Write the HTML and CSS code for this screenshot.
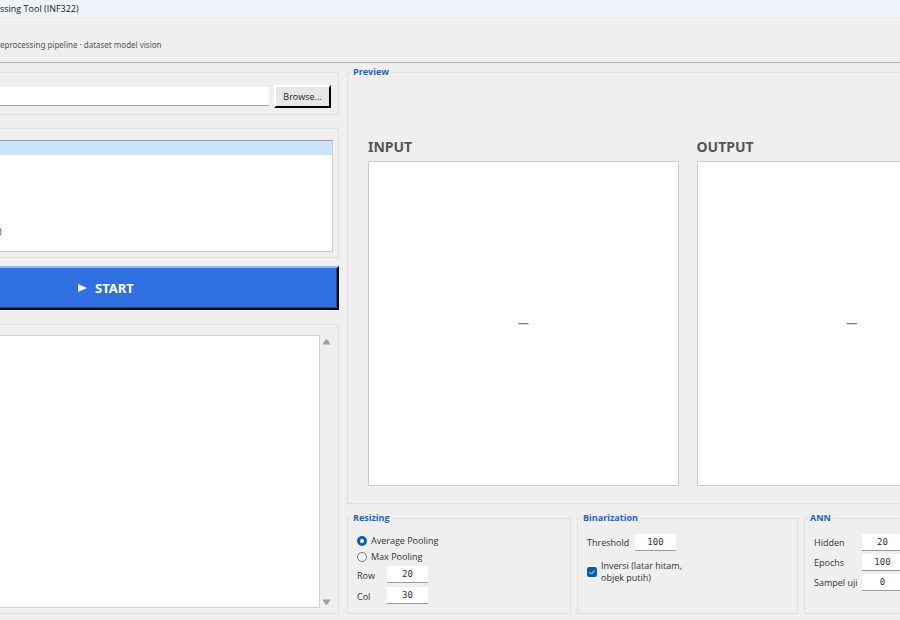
FILE: index.html
```
<!DOCTYPE html>
<html lang="id">
<head>
<meta charset="utf-8">
<title>Processing Tool (INF322)</title>
<link rel="stylesheet" href="styles.css">
</head>
<body>
<div class="window">
  <div class="titlebar">ssing Tool (INF322)</div>
  <header class="header">eprocessing pipeline · dataset model vision</header>
  <main class="main">
    <div class="side">
      <section class="panel file">
        <input class="path" type="text" aria-label="Path">
        <button class="browse" type="button">Browse...</button>
      </section>
      <section class="panel steps">
        <ul class="list">
          <li class="selected"></li><li></li><li></li><li></li><li></li><li></li><li>)</li>
        </ul>
      </section>
      <button class="start" type="button"><svg width="9" height="8" viewBox="0 0 9 8"><path d="M0 0L9 4L0 8Z" fill="#fff"/></svg>START</button>
      <section class="panel log">
        <textarea class="output" aria-label="Log" readonly></textarea>
        <div class="scroll">
          <svg width="7" height="6" viewBox="0 0 7 6"><path d="M2.600 .5H4.400L7 4.500V5.500H0V4.500Z" fill="#a0a0a0"/></svg>
          <svg width="7" height="6" viewBox="0 0 7 6"><path d="M2.600 5.500H4.400L7 1.500V.5H0V1.500Z" fill="#a0a0a0"/></svg>
        </div>
      </section>
    </div>
    <div class="content">
      <fieldset class="group preview">
        <legend>Preview</legend>
        <div class="views">
          <figure><figcaption>INPUT</figcaption><div class="canvas"><span class="dash">—</span></div></figure>
          <figure><figcaption>OUTPUT</figcaption><div class="canvas"><span class="dash">—</span></div></figure>
        </div>
      </fieldset>
      <div class="settings">
        <fieldset class="group">
          <legend>Resizing</legend>
          <label class="option"><input type="radio" name="pool" checked>Average Pooling</label>
          <label class="option"><input type="radio" name="pool">Max Pooling</label>
          <div class="fields size">
            <label for="row">Row</label><input id="row" class="num" type="text" value="20">
            <label for="col">Col</label><input id="col" class="num" type="text" value="30">
          </div>
        </fieldset>
        <fieldset class="group">
          <legend>Binarization</legend>
          <div class="fields threshold">
            <label for="thr">Threshold</label><input id="thr" class="num" type="text" value="100">
          </div>
          <label class="option invert"><input type="checkbox" checked><span>Inversi (latar hitam,<br>objek putih)</span></label>
        </fieldset>
        <fieldset class="group">
          <legend>ANN</legend>
          <div class="fields ann">
            <label for="hid">Hidden</label><input id="hid" class="num" type="text" value="20">
            <label for="epo">Epochs</label><input id="epo" class="num" type="text" value="100">
            <label for="uji">Sampel uji</label><input id="uji" class="num" type="text" value="0">
          </div>
        </fieldset>
      </div>
    </div>
  </main>
</div>
</body>
</html>
```
FILE: styles.css
```
* { box-sizing: border-box; }
body {
  margin: 0;
  overflow: hidden;
  background: #efefef;
  color: #333;
  font: 9px/12px "Open Sans", "Noto Sans", sans-serif;
}
.window {
  display: flex;
  flex-direction: column;
  width: calc(100% + 128px);
  height: 100vh;
}
.titlebar {
  height: 18px;
  line-height: 18px;
  background: #eff4fa;
  border-bottom: 1px solid #e6e8ea;
  color: #222;
}
.header {
  height: 45px;
  padding-top: 21px;
  border-bottom: 1px solid #b4b4b4;
  color: #555;
  font-family: "Noto Sans", "Open Sans", sans-serif;
  font-size: 8px;
}
.main { flex: 1; display: flex; gap: 8px; min-height: 0; padding: 3px 0 6px; }
.side { display: flex; flex-direction: column; width: 339px; padding-top: 6px; }
.panel { display: flex; border: 1px solid #e0e0e0; border-left: 0; }
.file { height: 43px; margin-bottom: 13px; padding: 12px 7px 6px 0; gap: 5px; }
.path { flex: 1; height: 19px; margin-top: 2px; border: 0; border-bottom: 1px solid #a0a0a0; background: #fff; }
.browse {
  width: 57px;
  height: 23px;
  padding: 0;
  border: 2px solid;
  border-color: #fff #000 #000 #fff;
  background: #e7e7e7;
  color: #222;
  font: inherit;
}
.steps { height: 130px; margin-bottom: 8px; padding: 11px 5px 5px 0; }
.list {
  flex: 1;
  margin: 0;
  padding: 0;
  border: 1px solid #ccc;
  border-top-color: #999;
  border-left: 0;
  background: #fff;
  list-style: none;
}
.list li { height: 14px; line-height: 14px; text-indent: -1px; }
.list .selected { background: #cce4f7; }
.start {
  display: flex;
  align-items: center;
  gap: 8px;
  height: 44px;
  margin-bottom: 14px;
  padding: 0 0 0 78px;
  border: solid #05080f;
  border-width: 2px 2px 2px 0;
  border-top-color: #98b9f3;
  box-shadow: inset -1px -1px #1e4795;
  background: #306fe0;
  color: #fff;
  font: bold 13px/18px "Noto Sans", "Open Sans", sans-serif;
}
.log { flex: 1; padding: 10px 7px 5px 0; }
.output { flex: 1; padding: 0; resize: none; border: 1px solid #d0d0d0; border-left: 0; background: #fff; }
.scroll { display: flex; flex-direction: column; justify-content: space-between; align-items: flex-end; width: 11px; padding: 4px 1px 3px 0; }
.content { flex: 1; display: flex; flex-direction: column; gap: 8px; min-width: 0; }
.group { min-width: 0; margin: 0; padding: 0 9px; border: 1px solid #e0e0e0; }
legend { margin-left: -6px; padding: 0 2px; color: #1f64b8; font-weight: bold; }
.preview { flex: 1; padding: 0 20px; }
.preview legend { margin-left: -17px; }
.views { display: grid; grid-template-columns: 1fr 1fr; gap: 18px; height: 100%; padding: 60px 0 17px; }
figure { display: flex; flex-direction: column; margin: 0; }
figcaption { height: 23px; color: #555; font: bold 14px/18px "Noto Sans", "Open Sans", sans-serif; }
.canvas { flex: 1; display: flex; align-items: center; justify-content: center; padding-bottom: 4px; border: 1px solid #ccc; background: #fff; }
.dash { color: #777; font-size: 11px; font-weight: bold; line-height: 16px; }
.settings { display: grid; grid-template-columns: 224px 221px 1fr; gap: 6px; height: 102px; }
.option { display: flex; align-items: center; gap: 4px; height: 16px; }
.group > .option:nth-child(2) { margin-top: 9px; }
.option input { appearance: none; flex: none; width: 10px; height: 10px; margin: 0; border: 1px solid #777; border-radius: 5px; background: #f6f6f6; }
.option input[type="radio"]:checked { border: 3px solid #0a5fb4; background: #fff; }
.option input[type="checkbox"] {
  border: 0;
  border-radius: 2px;
  background: #0a5fb4 url("data:image/svg+xml,%3Csvg xmlns='http://www.w3.org/2000/svg' viewBox='0 0 10 10'%3E%3Cpath d='M2.500 5L4.500 7L7.500 3.500' fill='none' stroke='%23fff' stroke-width='.9'/%3E%3C/svg%3E");
}
.fields { display: grid; align-items: center; }
.num {
  width: 41px;
  height: 17px;
  padding: 0;
  border: 0;
  border-bottom: 1px solid #999;
  background: #fff;
  color: #333;
  font: 9px/12px "DejaVu Sans Mono", monospace;
  text-align: center;
}
.size { grid-template-columns: 30px 41px; row-gap: 4px; margin-top: 1px; }
.size label { padding-top: 3px; }
.threshold { grid-template-columns: 48px 41px; margin-top: 10px; }
.invert { height: 24px; margin-top: 9px; }
.ann { grid-template-columns: 48px 41px; row-gap: 3px; margin-top: 10px; }
```
